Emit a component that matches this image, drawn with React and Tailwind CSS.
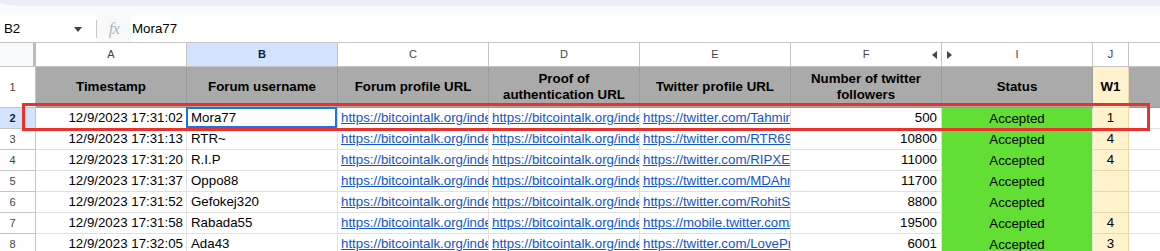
import React from "react";

const font = { fontFamily: '"Liberation Sans", Arial, sans-serif' };

const rows = [
  ["12/9/2023 17:31:02", "Mora77", "https://twitter.com/Tahmina_crypto", "500", "1"],
  ["12/9/2023 17:31:13", "RTR~", "https://twitter.com/RTR6969", "10800", "4"],
  ["12/9/2023 17:31:20", "R.I.P", "https://twitter.com/RIPXEN", "11000", "4"],
  ["12/9/2023 17:31:37", "Oppo88", "https://twitter.com/MDAhmed", "11700", ""],
  ["12/9/2023 17:31:52", "Gefokej320", "https://twitter.com/RohitSh", "8800", ""],
  ["12/9/2023 17:31:58", "Rabada55", "https://mobile.twitter.com/rabada", "19500", "4"],
  ["12/9/2023 17:32:05", "Ada43", "https://twitter.com/LovePrime", "6001", "3"],
];

const profileUrl = "https://bitcointalk.org/index.php?action=profile;u=3456789";
const proofUrl = "https://bitcointalk.org/index.php?topic=5477654.msg63301234";

function Letter({ children, w = "w-[151px]", active, extra }) {
  return (
    <div
      className={`${w} h-full shrink-0 border-r border-[#c4c4c4] flex items-center justify-center text-[11px] relative ${
        active ? "bg-[#d3e3fd] text-[#041e49] font-bold" : "bg-white text-[#444]"
      }`}
    >
      {children}
      {extra}
    </div>
  );
}

function Head({ children, w = "w-[151px]", yellow }) {
  return (
    <div
      className={`${w} h-full shrink-0 border-r border-b flex items-center justify-center text-center font-bold text-[13.3px] leading-[16px] text-black ${
        yellow ? "bg-[#fff2cc] border-[#e8d9ad]" : "bg-[#aaaaaa] border-[#9b9b9b]"
      }`}
    >
      {children}
    </div>
  );
}

function Link({ href }) {
  return (
    <div className="w-[151px] h-full shrink-0 border-r border-b border-[#e1e1e1] overflow-hidden whitespace-nowrap flex items-center pl-[3px]">
      <span className="text-[#1155cc] underline">{href}</span>
    </div>
  );
}

export default function App() {
  return (
    <div className="relative w-[1160px] h-[251px] overflow-hidden bg-white text-[13.3px] text-black" style={font}>
      {/* top chrome */}
      <div className="h-[15px] bg-[#f9fbfd]">
        <div className="h-[6px] bg-[#e9eef6] rounded-bl-[26px_6px] ml-[-4px]" />
      </div>

      {/* formula bar */}
      <div className="h-[28px] flex items-center border-b border-[#c4c4c4] bg-white">
        <div className="w-[96px] h-full flex items-center pl-[4px] pr-[14px] justify-between">
          <span>B2</span>
          <svg width="8" height="5" viewBox="0 0 8 5" className="mt-[1px]">
            <path d="M0 0h8L4 5z" fill="#444" />
          </svg>
        </div>
        <div className="w-px h-[18px] bg-[#c7c7c7]" />
        <div className="w-[34px] h-full bg-[#f8f9fa] flex items-center justify-center">
          <span
            className="italic text-[17px] text-[#b5b5b5] tracking-[-1px]"
            style={{ fontFamily: '"Liberation Serif", serif' }}
          >
            fx
          </span>
        </div>
        <span className="pl-[1px]">Mora77</span>
      </div>

      {/* column letters */}
      <div className="h-[24px] flex border-b border-[#c4c4c4]">
        <div className="w-[36px] h-full shrink-0 bg-[#f8f9fa] border-r-[3px] border-[#bdbdbd]" />
        <Letter>A</Letter>
        <Letter active>B</Letter>
        <Letter>C</Letter>
        <Letter>D</Letter>
        <Letter>E</Letter>
        <Letter
          extra={
            <svg width="5" height="8" viewBox="0 0 5 8" className="absolute right-[4px] top-[8px]">
              <path d="M5 0v8L0 4z" fill="#444" />
            </svg>
          }
        >
          F
        </Letter>
        <Letter
          extra={
            <svg width="5" height="8" viewBox="0 0 5 8" className="absolute left-[5px] top-[8px]">
              <path d="M0 0v8l5-4z" fill="#444" />
            </svg>
          }
        >
          I
        </Letter>
        <Letter w="w-[36px]">J</Letter>
        <Letter w="w-[40px]"></Letter>
      </div>

      {/* header row */}
      <div className="h-[41px] flex">
        <div className="w-[36px] h-full shrink-0 bg-white border-r border-b border-[#c4c4c4] flex items-center justify-center pr-[10px] text-[11px] text-[#444]">
          1
        </div>
        <Head>Timestamp</Head>
        <Head>Forum username</Head>
        <Head>Forum profile URL</Head>
        <Head>
          Proof of
          <br />
          authentication URL
        </Head>
        <Head>Twitter profile URL</Head>
        <Head>
          Number of twitter
          <br />
          followers
        </Head>
        <Head>Status</Head>
        <Head w="w-[36px]" yellow>
          W1
        </Head>
        <Head w="w-[40px]"></Head>
      </div>

      {/* data rows */}
      {rows.map((r, i) => {
        const sel = i === 0;
        return (
          <div key={i} className="h-[21px] flex">
            <div
              className={`w-[36px] h-full shrink-0 border-r border-b border-[#c4c4c4] flex items-center justify-center pr-[10px] text-[11px] ${
                sel ? "bg-[#d3e3fd] text-[#041e49] font-bold" : "bg-white text-[#444]"
              }`}
            >
              {i + 2}
            </div>
            <div className="w-[151px] h-full shrink-0 border-r border-b border-[#e1e1e1] flex items-center justify-end pr-[3px] whitespace-nowrap">
              {r[0]}
            </div>
            <div className="w-[151px] h-full shrink-0 border-r border-b border-[#e1e1e1] flex items-center pl-[4px] whitespace-nowrap relative">
              {r[1]}
              {sel && <div className="absolute -left-px -top-px right-0 bottom-0 border-2 border-[#1a73e8]" />}
            </div>
            <Link href={profileUrl} />
            <Link href={proofUrl} />
            <Link href={r[2]} />
            <div className="w-[151px] h-full shrink-0 border-r border-b border-[#e1e1e1] flex items-center justify-end pr-[4px]">
              {r[3]}
            </div>
            <div className="w-[151px] h-full shrink-0 bg-[#63de35] border-r border-[#e1e1e1] flex items-center justify-center">
              Accepted
            </div>
            <div className="w-[36px] h-full shrink-0 bg-[#fff2cc] border-r border-b border-[#ead9a8] flex items-center justify-center">
              {r[4]}
            </div>
            <div className="w-[40px] h-full shrink-0 border-b border-[#e1e1e1]" />
          </div>
        );
      })}

      {/* highlight box */}
      <div className="absolute left-[22px] top-[103px] w-[1128px] h-[28px] border-[3px] border-[#e8322b]" />
    </div>
  );
}
